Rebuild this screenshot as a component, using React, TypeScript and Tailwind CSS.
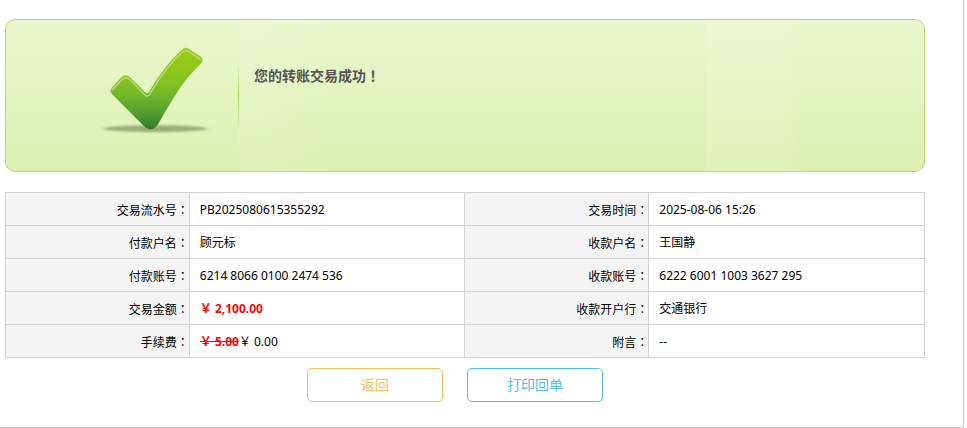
import type { ReactNode } from "react";

type Field = { label: string; value: ReactNode };

const rows: [Field, Field][] = [
    [
        { label: "交易流水号", value: "PB2025080615355292" },
        { label: "交易时间", value: "2025-08-06 15:26" },
    ],
    [
        { label: "付款户名", value: "顾元标" },
        { label: "收款户名", value: "王国静" },
    ],
    [
        { label: "付款账号", value: "6214 8066 0100 2474 536" },
        { label: "收款账号", value: "6222 6001 1003 3627 295" },
    ],
    [
        {
            label: "交易金额",
            value: <strong className="text-[#ff0000]">￥ 2,100.00</strong>,
        },
        { label: "收款开户行", value: "交通银行" },
    ],
    [
        {
            label: "手续费",
            value: (
                <>
                    <del className="font-bold text-[#ff0000]">￥ 5.00</del>￥ 0.00
                </>
            ),
        },
        { label: "附言", value: "--" },
    ],
];

const SuccessIcon = () => {
    const tick =
        "M65 158 L94 127 Q106 115 120 126 L165 171 Q172 178 178 169 Q222 92 275 44 Q287 34 298 42 L333 65 Q342 74 335 84 Q290 126 258 178 Q230 222 205 267 Q190 293 168 280 Q158 270 150 262 L66 178 Q57 168 65 158 Z";

    return (
        <svg width="130" height="110" viewBox="0 0 390 330" aria-hidden="true">
            <defs>
                <linearGradient id="tickFill" x1="0" y1="0" x2="0" y2="1">
                    <stop offset="0" stopColor="#9ccc12" />
                    <stop offset="0.35" stopColor="#8bc41e" />
                    <stop offset="0.55" stopColor="#76b92a" />
                    <stop offset="0.78" stopColor="#559f2c" />
                    <stop offset="1" stopColor="#2c7b2c" />
                </linearGradient>
                <filter id="shadowBlur" x="-20%" y="-100%" width="140%" height="300%">
                    <feGaussianBlur stdDeviation="6 3" />
                </filter>
            </defs>
            <ellipse
                cx="196"
                cy="281"
                rx="156"
                ry="10"
                fill="#8a9a6a"
                opacity="0.8"
                filter="url(#shadowBlur)"
            />
            <path d={tick} fill="url(#tickFill)" stroke="#d3ecab" strokeWidth="1" />
            <path
                d="M65 166 L96 134 Q107 123 119 133 L165 180 Q173 188 180 177 Q228 94 277 52 Q288 43 299 52 L331 73"
                fill="none"
                stroke="#b9dd85"
                strokeWidth="4"
            />
        </svg>
    );
};

const Banner = () => {
    return (
        <section className="relative flex h-[153px] items-start overflow-hidden rounded-[10px] border border-[#b3d977] bg-linear-to-b from-[#eaf7ce] to-[#def0b1]">
            <div className="absolute inset-y-0 left-[233px] w-24 bg-linear-to-r from-white/10 to-transparent" />
            <div className="absolute inset-y-0 left-[76.3%] w-24 bg-linear-to-r from-white/10 from-80% to-transparent" />
            <div className="flex w-[232px] shrink-0 justify-end pt-[15px] pr-[18px]">
                <SuccessIcon />
            </div>
            <div className="mt-11 h-16 w-px bg-linear-to-b from-transparent via-[#a4d33a] to-transparent" />
            <h1 className="relative mt-[45px] ml-[15px] text-sm leading-5 font-bold text-[#555555]">
                您的转账交易成功
                <span className="font-['Noto_Sans_CJK_TC',sans-serif]">！</span>
            </h1>
        </section>
    );
};

const DetailCells = ({ label, value }: Field) => {
    return (
        <>
            <th
                scope="row"
                className="h-[33px] w-1/5 border border-[#d3d3d3] bg-[#f4f4f4] px-0 pt-0.5 pb-0 text-right font-normal"
            >
                {label}
                <span className="font-['Noto_Sans_CJK_TC',sans-serif]">：</span>
            </th>
            <td className="w-3/10 border border-[#d3d3d3] pt-0.5 pr-0 pb-0 pl-2.5">
                {value}
            </td>
        </>
    );
};

const App = () => {
    return (
        <main className="mr-[3px] border-r border-b border-[#cccccc] bg-white pt-[19px] pr-[38px] pb-[25px] pl-[5px] font-['Noto_Sans','Noto_Sans_CJK_SC',sans-serif] text-black">
            <Banner />
            <table className="mt-5 w-full table-fixed border-collapse text-xs leading-4">
                <tbody>
                    {rows.map(([left, right]) => (
                        <tr key={left.label}>
                            <DetailCells {...left} />
                            <DetailCells {...right} />
                        </tr>
                    ))}
                </tbody>
            </table>
            <div className="mt-2.5 flex justify-center gap-6 pr-5 text-sm">
                <button
                    type="button"
                    className="h-[34px] w-[136px] rounded-[5px] border border-[#f8bc56] text-[#f8bc56]"
                >
                    返回
                </button>
                <button
                    type="button"
                    className="h-[34px] w-[136px] rounded-[5px] border border-[#4fbdee] text-[#4fbdee]"
                >
                    打印回单
                </button>
            </div>
        </main>
    );
};

export default App;
